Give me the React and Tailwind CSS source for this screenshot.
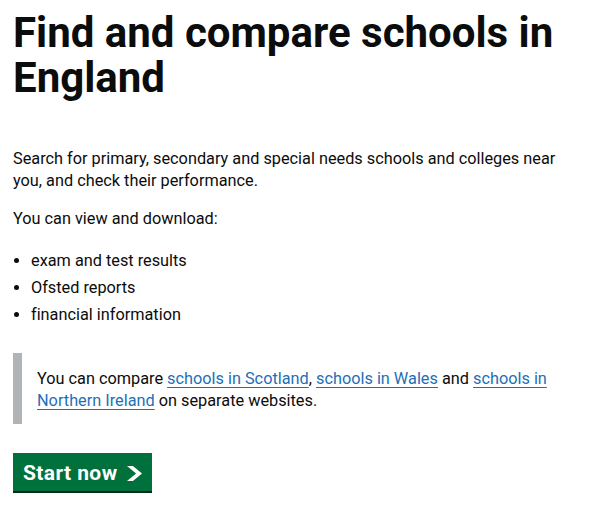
import React from "react";

function Chevron() {
  return (
    <svg
      width="15"
      height="15"
      viewBox="0 0 33 40"
      preserveAspectRatio="none"
      aria-hidden="true"
      className="shrink-0"
    >
      <path fill="currentColor" d="M0 0h13l20 20-20 20H0l20-20z" />
    </svg>
  );
}

function Link({ children }) {
  return (
    <a
      href="#"
      className="text-[#1d70b8] underline decoration-1 underline-offset-[3px]"
    >
      {children}
    </a>
  );
}

export default function App() {
  return (
    <div className="min-h-[512px] bg-white px-[13px] pt-[10px] font-['Roboto',sans-serif] text-[#0b0c0c] [font-variant-ligatures:none]">
      <h1 className="mb-[48px] text-[42px] font-bold leading-[45px]">
        Find and compare schools in England
      </h1>

      <p className="mb-[16px] text-[16.3px] leading-[22px]">
        Search for primary, secondary and special needs schools and colleges
        near you, and check their performance.
      </p>

      <p className="mb-[20px] text-[16.3px] leading-[22px]">
        You can view and download:
      </p>

      <ul className="mb-[27px] list-disc pl-[18px] text-[16.3px] leading-[22px]">
        <li className="mb-[5px]">exam and test results</li>
        <li className="mb-[5px]">Ofsted reports</li>
        <li className="mb-[5px]">financial information</li>
      </ul>

      <div className="border-l-[9px] border-[#b1b4b6] pb-[12px] pl-[15px] pt-[15px] text-[16.3px] leading-[22px]">
        You can compare <Link>schools in Scotland</Link>,{" "}
        <Link>schools in Wales</Link> and{" "}
        <Link>schools in Northern Ireland</Link> on separate websites.
      </div>

      <a
        href="#"
        className="mt-[29px] inline-flex items-center gap-[10px] bg-[#00703c] pb-[5px] pl-[10px] pr-[10px] pt-[8px] text-[21px] font-bold leading-[25px] tracking-[0.4px] text-white shadow-[0_2px_0_#002d18]"
      >
        Start now
        <Chevron />
      </a>
    </div>
  );
}
